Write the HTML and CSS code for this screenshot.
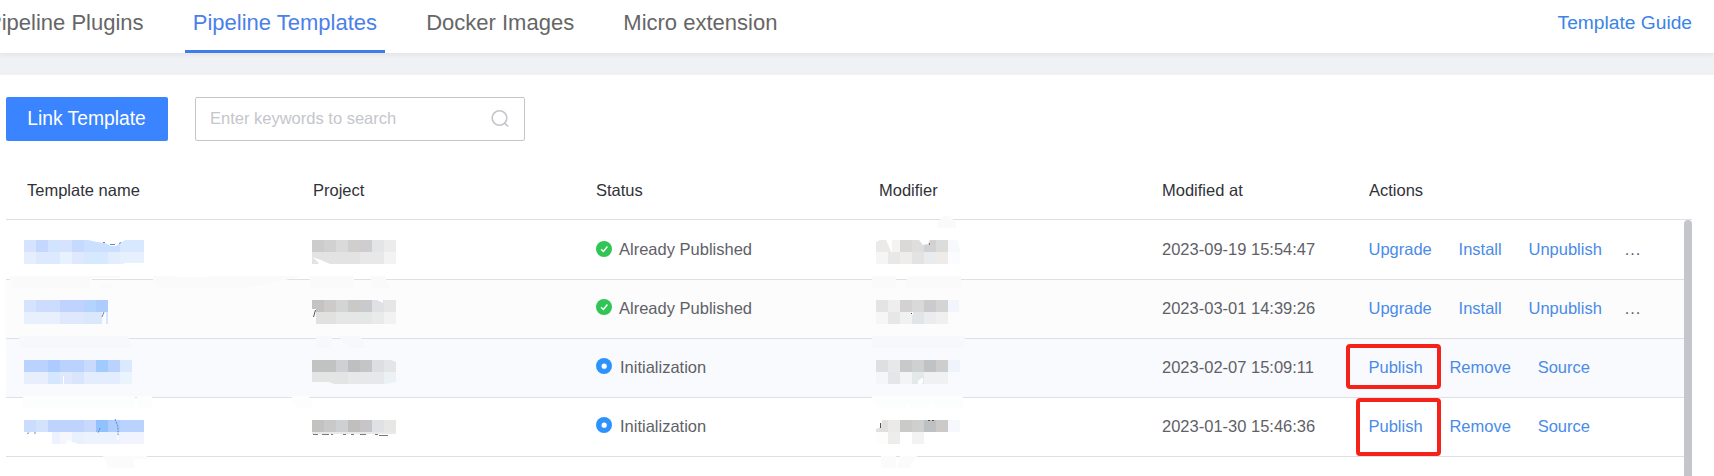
FILE: index.html
```html
<!DOCTYPE html>
<html lang="en">
<head>
<meta charset="utf-8">
<title>Pipeline Templates</title>
<link rel="stylesheet" href="styles.css">
</head>
<body>
<header class="topbar">
  <nav class="tabs">
    <a class="tab">Pipeline Plugins</a>
    <a class="tab active">Pipeline Templates</a>
    <a class="tab">Docker Images</a>
    <a class="tab">Micro extension</a>
  </nav>
  <a class="guide">Template Guide</a>
</header>
<main class="panel">
  <div class="toolbar">
    <button class="primary">Link Template</button>
    <div class="search">
      <span class="placeholder">Enter keywords to search</span>
      <svg class="search-icon" width="20" height="20" viewBox="0 0 20 20"><circle cx="9.500" cy="9" r="7.300"/><path d="M14.300 13.800l4 3.700"/></svg>
    </div>
  </div>
  <section class="table">
    <div class="row head"><span>Template name</span><span>Project</span><span>Status</span><span>Modifier</span><span>Modified at</span><span>Actions</span></div>
    <div class="body">
      <div class="rows">
        <div class="row first">
          <svg class="mosaic name" width="120" height="24"><path fill="#d6e3fe" d="M0 0h12v12H0z"/><path fill="#c5d7fe" d="M12 0h12v12H12z"/><path fill="#d2e3fe" d="M24 0h12v12H24z"/><path fill="#d7e2fe" d="M36 0h12v12H36z"/><path fill="#c5dafe" d="M48 0h12v12H48z"/><path fill="#cbdffe" d="M60 0h36v12H60z"/><path fill="#d8e8fe" d="M96 0h24v12H96z"/><path fill="#e6eefe" d="M0 12h12v12H0z"/><path fill="#dde9fe" d="M12 12h24v12H12z"/><path fill="#e8f1fe" d="M36 12h12v12H36z"/><path fill="#dfe9fe" d="M48 12h12v12H48z"/><path fill="#d7e9fe" d="M60 12h24v12H60z"/><path fill="#e2edfe" d="M84 12h12v12H84z"/><path fill="#e7f1fe" d="M96 12h24v12H96z"/><path fill="#fff" d="M64 0h37l-5 3-4 3h-5l-6-3-8-1zM100 23h20v1h-20z"/><path stroke="#5b8bc7" fill="none" d="M79 2.500h2M86 4.500h5M95 3.500l2-1"/></svg>
          <svg class="mosaic project" width="84" height="24"><path fill="#cdcccc" d="M0 0h12v12H0z"/><path fill="#d2d1d1" d="M12 0h12v12H12z"/><path fill="#dadada" d="M24 0h12v12H24z"/><path fill="#d0cfce" d="M36 0h12v12H36z"/><path fill="#ceced0" d="M48 0h12v12H48z"/><path fill="#e4e5e7" d="M60 0h12v12H60z"/><path fill="#ececec" d="M72 0h12v12H72z"/><path fill="#e3e3e3" d="M0 12h48v12H0z"/><path fill="#e8e8e8" d="M48 12h24v12H48z"/><path fill="#f3f3f3" d="M72 12h12v12H72z"/><path fill="#fff" d="M0 17l9 3 9 4h-11l-2-3z"/></svg>
          <span class="status"><svg width="16" height="16"><circle cx="8" cy="8" r="8" fill="#31c556"/><path class="tick" d="M5.100 8.200l2.300 2.300 4-5"/></svg>Already Published</span>
          <svg class="mosaic modifier" width="84" height="24"><path fill="#ebeae9" d="M0 2l4-2h6l5 11v1H0z"/><path fill="#f3f3f4" d="M16 0h8v12h-8z"/><path fill="#dad9d8" d="M24 0h12v12H24z"/><path fill="#dfdedd" d="M36 0h12v12H36z"/><path fill="#d1d2d4" d="M48 0h12v12H48z"/><path fill="#dcdcda" d="M60 0h12v12H60z"/><path fill="#f8f9fd" d="M72 0h9l3 8v4H72z"/><path fill="#f5f5f5" d="M0 12h12v12H0z"/><path fill="#e8e8e8" d="M12 12h12v12H12z"/><path fill="#efedeb" d="M24 12h12v12H24z"/><path fill="#e3e3e4" d="M36 12h12v12H36z"/><path fill="#eaebee" d="M48 12h12v12H48z"/><path fill="#eeebe9" d="M60 12h12v12H60z"/><path fill="#fafcff" d="M72 12h12v12H72z"/><path fill="#fff" d="M43 0h11l-2 4-5 1z"/><path fill="#a5784d" d="M53 3h1v2h-1z"/></svg>
          <span>2023-09-19 15:54:47</span>
          <span class="actions"><a>Upgrade</a><a>Install</a><a>Unpublish</a><i>...</i></span>
        </div>
        <div class="row alt">
          <svg class="mosaic name" width="96" height="24"><path fill="#d6e3fe" d="M0 0h12v12H0z"/><path fill="#cbdcfe" d="M12 0h24v12H12z"/><path fill="#bfd3fe" d="M36 0h24v12H36z"/><path fill="#b4d3fe" d="M60 0h12v12H60z"/><path fill="#accdfd" d="M72 0h12v12H72z"/><path fill="#e8f0fe" d="M0 12h36v12H0z"/><path fill="#dfe8fc" d="M36 12h24v12H36z"/><path fill="#dbe8fc" d="M60 12h18v12H60z"/><path fill="#d7e6fd" d="M82 12h2v12h-2z"/><path stroke="#5b8bc7" fill="none" d="M80 12l-2 5"/></svg>
          <svg class="mosaic project" width="84" height="24"><path fill="#c4c3c2" d="M0 0h12v12H4V9H0z"/><path fill="#cccbc9" d="M12 0h12v12H12z"/><path fill="#d3d5d4" d="M24 0h12v12H24z"/><path fill="#cac9c7" d="M36 0h12v12H36z"/><path fill="#c9cacd" d="M48 0h12v12H48z"/><path fill="#e0e1e4" d="M60 0h12v12H60z"/><path fill="#e6e6e6" d="M72 0h12v12H72z"/><path fill="#e1e1e0" d="M4 12h20v12H4z"/><path fill="#e5e6e6" d="M24 12h36v12H24z"/><path fill="#eaeaea" d="M60 12h12v12H60z"/><path fill="#f2f2f2" d="M72 12h12v12H72z"/><path fill="#fff" d="M65 0h6v3l-4-2z"/><path stroke="#555" fill="none" d="M3.500 10l-2 7"/></svg>
          <span class="status"><svg width="16" height="16"><circle cx="8" cy="8" r="8" fill="#31c556"/><path class="tick" d="M5.100 8.200l2.300 2.300 4-5"/></svg>Already Published</span>
          <svg class="mosaic modifier" width="84" height="24"><path fill="#e4e4e4" d="M0 0h12v12H0z"/><path fill="#eee" d="M12 0h12v12H12z"/><path fill="#d3d1d1" d="M24 0h12v12H24z"/><path fill="#d9d9d7" d="M36 0h12v12H36z"/><path fill="#cacbcd" d="M48 0h12v12H48z"/><path fill="#d4d4d4" d="M60 0h12v12H60z"/><path fill="#f3f5fc" d="M72 0h11v12H72z"/><path fill="#f6f6f6" d="M0 12h12v12H0z"/><path fill="#e6e7e9" d="M12 12h12v12H12z"/><path fill="#f1f1f2" d="M24 12h12v12H24z"/><path fill="#e2e5e8" d="M36 12h12v12H36z"/><path fill="#ececee" d="M48 12h12v12H48z"/><path fill="#f0f0f0" d="M60 12h12v12H60z"/><path fill="#fff" d="M35 12h2v3h-1z"/><path fill="#35546d" d="M35 13h1v1h-1z"/></svg>
          <span>2023-03-01 14:39:26</span>
          <span class="actions"><a>Upgrade</a><a>Install</a><a>Unpublish</a><i>...</i></span>
        </div>
        <div class="row hover">
          <svg class="mosaic name" width="108" height="24"><path fill="#b9d3fe" d="M0 0h24v12H0z"/><path fill="#adcbfe" d="M24 0h12v12H24z"/><path fill="#bad2fe" d="M36 0h24v12H36z"/><path fill="#c8dbfe" d="M60 0h12v12H60z"/><path fill="#a1cbfd" d="M72 0h12v12H72z"/><path fill="#bad3fe" d="M84 0h12v12H84z"/><path fill="#dae9fd" d="M96 0h12v12H96z"/><path fill="#e6effb" d="M0 12h24v12H0z"/><path fill="#d4e7fd" d="M24 12h12v12H24z"/><path fill="#e0e8fc" d="M36 12h12v12H36z"/><path fill="#d8e5fd" d="M48 12h12v12H48z"/><path fill="#e3edfd" d="M60 12h36v12H60z"/><path fill="#ebf3fd" d="M96 12h12v12H96z"/><path fill="#fff" d="M39 16h1v8h-1z"/></svg>
          <svg class="mosaic project" width="84" height="24"><path fill="#c1c2c2" d="M0 0h24v12H0z"/><path fill="#cdd1d3" d="M24 0h12v12H24z"/><path fill="#bfbfbf" d="M36 0h12v12H36z"/><path fill="#c4c5c6" d="M48 0h12v12H48z"/><path fill="#dcdfe2" d="M60 0h12v12H60z"/><path fill="#e3e5e7" d="M72 0h7l5 2v10H72z"/><path fill="#e3e5e5" d="M0 12h36v12H22l-5-2H0z"/><path fill="#e7e8ea" d="M36 12h36v12H36z"/><path fill="#ecf1f5" d="M72 12h12v10l-10 2h-2z"/></svg>
          <span class="status"><svg width="16" height="16"><circle cx="8" cy="8" r="8" fill="#2d92fc"/><circle cx="8.200" cy="8.200" r="2.600" fill="#fff"/></svg><b>Initialization</b></span>
          <svg class="mosaic modifier" width="84" height="24"><path fill="#dedfe1" d="M0 0h12v12H0z"/><path fill="#e7e8ea" d="M12 0h12v12H12z"/><path fill="#c9c9c9" d="M24 0h12v12H24z"/><path fill="#cfd0d0" d="M36 0h12v12H36z"/><path fill="#bfc3c6" d="M48 0h12v12H48z"/><path fill="#cdcdcd" d="M60 0h12v12H60z"/><path fill="#eef3fc" d="M72 0h12v12H72z"/><path fill="#f5f6f8" d="M0 12h12v12H0z"/><path fill="#e4e6ea" d="M12 12h12v12H12z"/><path fill="#f2f4f6" d="M24 12h12v12H24z"/><path fill="#e3e8e9" d="M36 12h12v12H36z"/><path fill="#eff1f3" d="M48 12h24v12H48z"/><path fill="#fff" d="M42 24v-3l4-3h1v5l-2 1z"/></svg>
          <span>2023-02-07 15:09:11</span>
          <span class="actions"><a>Publish</a><a>Remove</a><a>Source</a></span>
        </div>
        <div class="row">
          <svg class="mosaic name low" width="120" height="24"><path fill="#cbddfe" d="M0 0h12v12H0z"/><path fill="#d3e3fe" d="M12 0h12v12H12z"/><path fill="#bed4fe" d="M24 0h36v12H24z"/><path fill="#c9d9fe" d="M60 0h12v12H60z"/><path fill="#92c2fe" d="M72 0h12v12H72z"/><path fill="#aecdfe" d="M84 0h12v12H84z"/><path fill="#b9d2fe" d="M96 0h24v12H96z"/><path fill="#edf2fe" d="M28 12h8v12h-8z"/><path fill="#f6f7fe" d="M36 12h12v12H36z"/><path fill="#e9f0fe" d="M48 12h12v12H48z"/><path fill="#edf3fe" d="M60 12h36v12H60z"/><path fill="#f1f3fe" d="M96 12h24v12H96z"/><path fill="#fff" d="M43 20l11 4H43zM93 11l2 9-2-1z"/><path stroke="#5b8bc7" stroke-dasharray="2 1" fill="none" d="M3 13.500l3-1M11 12v3M76 8l-2 5M91 -1l3 8v8"/></svg>
          <svg class="mosaic project low" width="84" height="24"><path fill="#c2c2c1" d="M0 0h12v12H0z"/><path fill="#cac9c9" d="M12 0h12v12H12z"/><path fill="#ced0d1" d="M24 0h12v12H24z"/><path fill="#c0bfbd" d="M36 0h12v12H36z"/><path fill="#c6c6c8" d="M48 0h12v12H48z"/><path fill="#dfe1e4" d="M60 0h12v12H60z"/><path fill="#e7e7e6" d="M72 0h12v12H72z"/><path fill="#e9e9e9" d="M0 12h84v2H0z"/><path stroke="#777" fill="none" d="M1 14.500h5M10 14.500h7M19 14.500h2M31 14.500h3M39 14.500h3M48 14.500h6M63 14.500h3M67 15.500h9"/></svg>
          <span class="status"><svg width="16" height="16"><circle cx="8" cy="8" r="8" fill="#2d92fc"/><circle cx="8.200" cy="8.200" r="2.600" fill="#fff"/></svg><b>Initialization</b></span>
          <svg class="mosaic modifier low" width="84" height="24"><path fill="#e1e0df" d="M6 0h6v12H0V9l5-2z"/><path fill="#eaeaea" d="M12 0h12v12H12z"/><path fill="#cacac9" d="M24 0h12v12H24z"/><path fill="#cfcfce" d="M36 0h12v12H36z"/><path fill="#bdc1c4" d="M48 0h12v12H48z"/><path fill="#cbcac8" d="M60 0h12v12H60z"/><path fill="#f7f8fd" d="M72 0h12v12H72z"/><path fill="#fdfdfc" d="M0 12h12v12H0z"/><path fill="#ededed" d="M12 12h12v12H12z"/><path fill="#f3f3f3" d="M36 12h12v12H36z"/><path fill="#5b5350" d="M4 3h1v5H4zM52 0h2v1h-2zM56 0h2v1h-2z"/></svg>
          <span>2023-01-30 15:46:36</span>
          <span class="actions"><a>Publish</a><a>Remove</a><a>Source</a></span>
        </div>
      </div>
      <div class="scrollbar"></div>
    </div>
  </section>
</main>
<svg class="annotations" width="1714" height="476">
  <path fill="#fafafa" d="M10 276h110v2H92v2l-3 8H12v-8h-2zM153 276h19l4 1h31l4-1h89v1l-15 3-39 8h-85l-8-6zM309 276h45v12h-42zM371 276h15v4l4 8h-18zM98 288l8-4 8 4zM872 276h24v12h-24zM908 276h53v12h-57zM938 222l6-6h6l6 7v5h-19z"/>
  <path fill="#f7f8fa" d="M19 336h109l4 12H19zM316 336h17l-4 12h-13zM338 336h22l7 12h-18zM872 336h93v12h-93z"/>
  <path fill="#fcfdfd" d="M23 396h112v12H23zM137 396h15v12h-15zM291 396h18l4 12h-16zM872 396h91v12h-27l-3-5-5 5h-17l-3-5-3 5h-23l-10-8z"/>
  <path fill="#fbfbfb" d="M103 456h44v3h-13v9h-26zM881 456h15v12h-15zM900 456h17l-8 12h-12z"/>
  <rect class="marker" x="1348" y="346" width="91" height="41" rx="2"/>
  <rect class="marker" x="1358" y="400" width="81" height="54" rx="2"/>
</svg>
</body>
</html>
```
FILE: styles.css
```css
* { box-sizing: border-box; }
body {
  margin: 0;
  height: 476px;
  overflow: hidden;
  position: relative;
  background: #eff1f4;
  font-family: "Liberation Sans", Arial, sans-serif;
  font-size: 16.5px;
  color: #5f6168;
}
.topbar {
  height: 53px;
  display: flex;
  justify-content: space-between;
  background: #fff;
  box-shadow: 0 2px 5px rgba(0, 0, 0, 0.06);
}
.tabs { display: flex; gap: 33.2px; margin-left: -21px; }
.tab {
  padding: 10px 8px 0;
  height: 53px;
  line-height: 26px;
  font-size: 22px;
  color: #666;
  white-space: nowrap;
}
.active { color: #4a80ea; border-bottom: 3px solid #3f7ee8; }
.guide { padding: 11px 22px 0 0; line-height: 24px; font-size: 19.2px; color: #3a84e8; }
.panel { margin-top: 22px; height: 401px; padding: 22px 22px 0 6px; background: #fff; }
.toolbar { display: flex; gap: 27px; height: 44px; }
.primary {
  width: 162px;
  padding: 0 1px 0 0;
  border: 0;
  border-radius: 2px;
  background: #3a84ff;
  color: #fff;
  font: 19.3px "Liberation Sans", Arial, sans-serif;
}
.search {
  width: 330px;
  display: flex;
  align-items: center;
  justify-content: space-between;
  padding: 0 14px;
  border: 1px solid #c4c6cc;
  border-radius: 2px;
}
.placeholder { color: #c4c6cc; padding-bottom: 2px; }
.search-icon { fill: none; stroke: #c4c6cc; stroke-width: 1.6; }
.table { margin-top: 19px; }
.row {
  display: grid;
  grid-template-columns: 286px 283px 283px 283px 207px 1fr;
  align-items: center;
  height: 59px;
  padding-left: 21px;
  border-bottom: 1px solid #dfe0e5;
}
.row > span { padding-bottom: 2px; }
.row.first { height: 60px; }
.row.first > span { padding-bottom: 0; }
.row.head { height: 60px; color: #313238; }
.row.head > span { padding: 2px 0 0; }
.alt { background: #fcfcfc; }
.hover { background: #f9fafd; }
.body { display: flex; height: 257px; }
.rows { flex: 1; }
.scrollbar { width: 8px; border-radius: 4px 4px 0 0; background: #c4c6cc; }
.status { display: flex; align-items: center; }
.status svg { margin: -2px 7px 0 0; }
.status b { font-weight: normal; margin-left: 1px; }
.tick { fill: none; stroke: #fff; stroke-width: 1.4; }
.mosaic { align-self: start; margin-top: 20px; overflow: visible; }
.hover .mosaic { margin-top: 21px; }
.mosaic.low { margin-top: 22px; }
.name { margin-left: -3px; }
.project { margin-left: -1px; }
.modifier { margin-left: -3px; }
.actions { display: flex; gap: 26.8px; margin-left: -0.5px; color: #4a8be8; }
.actions i { margin-left: -4px; font-style: normal; letter-spacing: 1px; color: #5f6168; }
.annotations { position: absolute; left: 0; top: 0; }
.marker { fill: none; stroke: #f5221a; stroke-width: 4; }
```
